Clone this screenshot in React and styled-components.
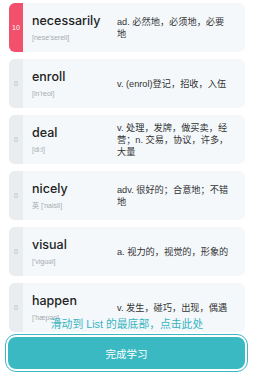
import React from 'react';
import styled, { createGlobalStyle } from 'styled-components';

const GlobalStyle = createGlobalStyle`
  html, body {
    margin: 0;
    padding: 0;
    background: #fff;
  }
  body {
    font-family: "Liberation Sans", "Noto Sans CJK SC", sans-serif;
  }
`;

const Screen = styled.div`
  position: relative;
  width: 254px;
  height: 375px;
  overflow: hidden;
  background: #fff;
`;

const List = styled.div`
  display: flex;
  flex-direction: column;
  gap: 7px;
  padding: 3px 9px 0 9px;
`;

const Card = styled.div`
  display: flex;
  min-height: 49px;
  border-radius: 6px;
  background: #f4f8fb;
  overflow: hidden;
`;

const Count = styled.div`
  flex: 0 0 14px;
  display: flex;
  align-items: center;
  justify-content: center;
  font-size: 7px;
  color: ${(props) => (props.active ? '#fff' : '#b4b9bd')};
  background: ${(props) => (props.active ? '#f2506c' : '#e9edf0')};
`;

const Body = styled.div`
  flex: 1;
  display: flex;
  align-items: center;
  padding: 2px 8px 2px 9px;
`;

const WordCol = styled.div`
  flex: 0 0 85px;
  display: flex;
  flex-direction: column;
  gap: 4px;
`;

const Word = styled.div`
  font-family: Inter, "Liberation Sans", sans-serif;
  font-weight: 500;
  font-size: 12.5px;
  line-height: 16px;
  color: #222;
`;

const Phonetic = styled.div`
  font-size: 7px;
  line-height: 9px;
  color: #a6abb0;
  white-space: nowrap;
`;

const Definition = styled.div`
  flex: 1;
  display: flex;
  flex-direction: column;
`;

const DefLine = styled.span`
  font-size: 9.2px;
  line-height: 12px;
  color: #333;
  white-space: nowrap;
`;

const Footer = styled.div`
  position: absolute;
  left: 0;
  right: 0;
  bottom: 0;
  display: flex;
  flex-direction: column;
  align-items: center;
`;

const Hint = styled.div`
  font-size: 10.8px;
  line-height: 14px;
  color: #36b4bf;
  margin-bottom: 3px;
`;

const ButtonWrap = styled.div`
  align-self: stretch;
  margin: 0 6px 3px 5px;
  padding: 2px;
  border: 1.5px solid #3bb8c2;
  border-radius: 11px;
  background: #fff;
`;

const DoneButton = styled.button`
  display: block;
  width: 100%;
  height: 32px;
  border: none;
  border-radius: 8px;
  background: #3bb9c3;
  color: #fff;
  font-family: "Noto Sans CJK SC", sans-serif;
  font-size: 10.5px;
  cursor: pointer;
`;

const words = [
  { count: 10, word: 'necessarily', phonetic: "[nese'sereli]", def: ['ad. 必然地，必须地，必要', '地'] },
  { count: 0, word: 'enroll', phonetic: "[in'reol]", def: ['v. (enrol)登记，招收，入伍'] },
  { count: 0, word: 'deal', phonetic: '[di:l]', def: ['v. 处理，发牌，做买卖，经', '营；n. 交易，协议，许多，', '大量'] },
  { count: 0, word: 'nicely', phonetic: "英 ['naisli]", def: ['adv. 很好的；合意地；不错', '地'] },
  { count: 0, word: 'visual', phonetic: "['viguəl]", def: ['a. 视力的，视觉的，形象的'] },
  { count: 0, word: 'happen', phonetic: "['hæpən]", def: ['v. 发生，碰巧，出现，偶遇'] },
];

const App = () => {
  return (
    <Screen>
      <GlobalStyle />
      <List>
        {words.map((w) => (
          <Card key={w.word}>
            <Count active={w.count > 0}>{w.count}</Count>
            <Body>
              <WordCol>
                <Word>{w.word}</Word>
                <Phonetic>{w.phonetic}</Phonetic>
              </WordCol>
              <Definition>
                {w.def.map((line) => (
                  <DefLine key={line}>{line}</DefLine>
                ))}
              </Definition>
            </Body>
          </Card>
        ))}
      </List>
      <Footer>
        <Hint>滑动到 List 的最底部，点击此处</Hint>
        <ButtonWrap>
          <DoneButton>完成学习</DoneButton>
        </ButtonWrap>
      </Footer>
    </Screen>
  );
};

export default App;
